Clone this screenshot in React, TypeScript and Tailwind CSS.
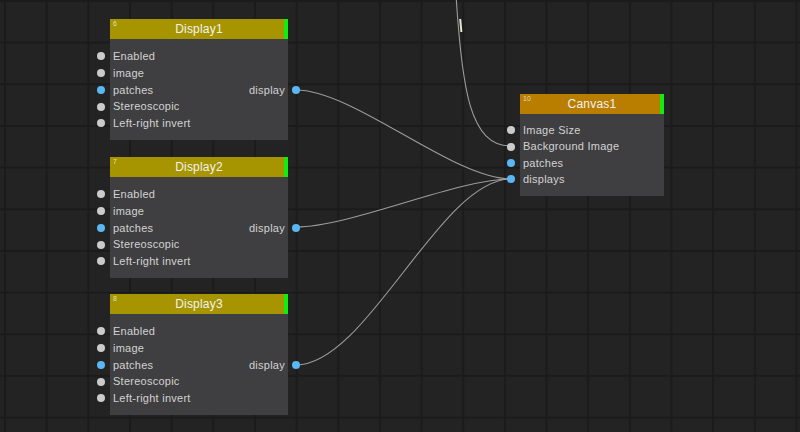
import React from "react";

type Slot = { label: string; kind: "gray" | "blue" };

type NodeProps = {
  id: number;
  title: string;
  x: number;
  y: number;
  width: number;
  header: string;
  inputs: Slot[];
  outputs?: { label: string; row: number }[];
  body: string;
  row: string;
};

const displayInputs: Slot[] = [
  { label: "Enabled", kind: "gray" },
  { label: "image", kind: "gray" },
  { label: "patches", kind: "blue" },
  { label: "Stereoscopic", kind: "gray" },
  { label: "Left-right invert", kind: "gray" },
];

const canvasInputs: Slot[] = [
  { label: "Image Size", kind: "gray" },
  { label: "Background Image", kind: "gray" },
  { label: "patches", kind: "blue" },
  { label: "displays", kind: "blue" },
];

function Dot({ kind, side }: { kind: "gray" | "blue"; side: "left" | "right" }) {
  return (
    <span
      className={
        (side === "left" ? "left-[-13px] " : "right-[-12px] ") +
        (kind === "blue" ? "bg-[#5ab7f3] " : "bg-[#cbcbcb] ") +
        "absolute top-1/2 h-2 w-2 -translate-y-1/2 rounded-full"
      }
    />
  );
}

function GraphNode({ id, title, x, y, width, header, inputs, outputs = [], body, row }: NodeProps) {
  return (
    <div className="absolute" style={{ left: x, top: y, width }}>
      {/* title bar with the green status strip on the right */}
      <div className="relative flex h-5" style={{ background: header }}>
        <span className="absolute left-[3px] top-[1px] text-[7px] leading-none text-white/70">{id}</span>
        <div className="flex flex-1 items-center justify-center pl-1 text-[12px] tracking-[0.2px] text-[#f2f2f2]">{title}</div>
        <div className="w-1 bg-[#10ee10]" />
      </div>
      <div className={"bg-[#3f3f41] " + body}>
        {inputs.map((s, i) => {
          const out = outputs.find((o) => o.row === i);
          return (
            <div
              key={s.label}
              className={"relative flex items-center justify-between px-[3px] text-[11px] tracking-[0.25px] text-[#d2d2d2] " + row}
            >
              <Dot kind={s.kind} side="left" />
              <span>{s.label}</span>
              {out && (
                <>
                  <span>{out.label}</span>
                  <Dot kind="blue" side="right" />
                </>
              )}
            </div>
          );
        })}
      </div>
    </div>
  );
}

export default function App() {
  return (
    <div
      className="relative h-[432px] w-[800px] overflow-hidden bg-[#232323] bg-[linear-gradient(to_right,#1b1b1b_2px,transparent_2px),linear-gradient(to_bottom,#1b1b1b_2px,transparent_2px)] bg-[size:41.67px_41.67px] bg-[position:4px_0px] font-['Liberation_Sans',Arial,sans-serif]"
    >
      {/* links between slots */}
      <svg className="absolute inset-0" width="800" height="432" fill="none">
        <g stroke="#9c9c9c" strokeWidth="1.1">
          <path d="M456 -5 C462 90, 470 146, 511 146" />
          <path d="M296 90 C354 90, 453 179, 511 179" />
          <path d="M296 227 C351 227, 456 179, 511 179" />
          <path d="M296 365 C367 365, 440 179, 511 179" />
        </g>
        <path d="M460.2 19 L461.4 32" stroke="#e6e6d2" strokeWidth="2" />
      </svg>

      {[
        { id: 6, title: "Display1", y: 19 },
        { id: 7, title: "Display2", y: 157 },
        { id: 8, title: "Display3", y: 294 },
      ].map((n) => (
        <GraphNode
          key={n.id}
          id={n.id}
          title={n.title}
          x={110}
          y={n.y}
          width={178}
          header="#a69500"
          inputs={displayInputs}
          outputs={[{ label: "display", row: 2 }]}
          body="pt-[9px] pb-2"
          row="h-[16.75px]"
        />
      ))}

      <GraphNode
        id={10}
        title="Canvas1"
        x={520}
        y={94}
        width={144}
        header="#b97d00"
        inputs={canvasInputs}
        body="pt-2 pb-2"
        row="h-[16.4px]"
      />
    </div>
  );
}
